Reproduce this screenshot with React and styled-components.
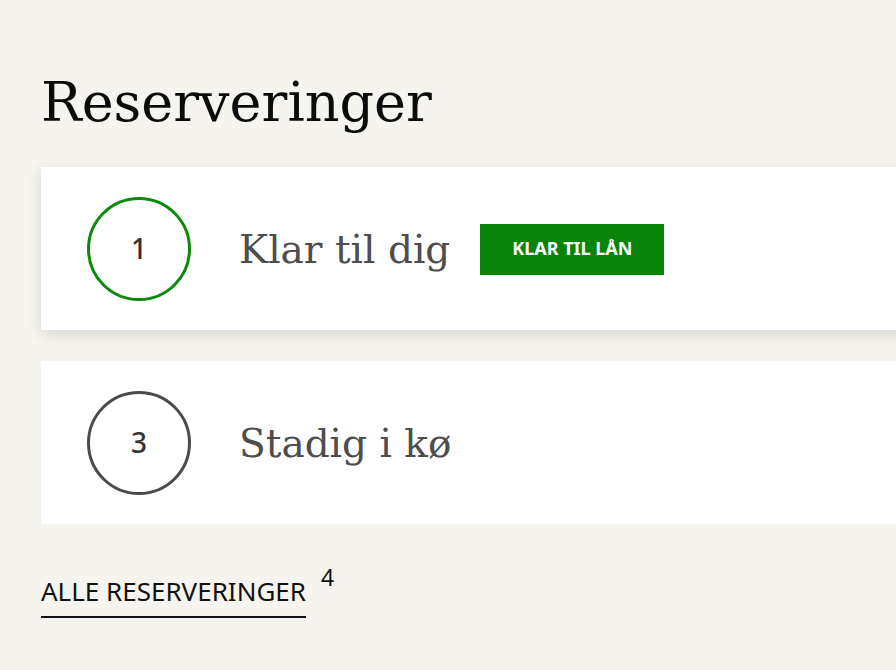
import styled, { createGlobalStyle } from 'styled-components';

const GlobalStyle = createGlobalStyle`
	html, body {
		margin: 0;
		padding: 0;
		background: #f5f4ef;
		overflow: hidden;
	}
`;

const Page = styled.div`
	padding: 70px 0 40px 41px;
	min-height: 670px;
	box-sizing: border-box;
`;

const Title = styled.h1`
	margin: 0 0 31px;
	font-family: 'DejaVu Serif', serif;
	font-weight: 400;
	font-size: 54px;
	line-height: 66px;
	color: #0b0b0b;
`;

const List = styled.div`
	display: flex;
	flex-direction: column;
	gap: 31px;
	margin-right: -40px;
`;

const Card = styled.div`
	display: flex;
	align-items: center;
	padding: 30px 46px 29px;
	background: #fff;
	box-shadow: ${(p) => (p.$raised ? '0 4px 14px rgba(0, 0, 0, 0.12)' : 'none')};
`;

const Count = styled.div`
	width: 104px;
	height: 104px;
	flex: none;
	box-sizing: border-box;
	border-radius: 50%;
	border: 3px solid ${(p) => p.$color};
	display: flex;
	align-items: center;
	justify-content: center;
	font-family: 'Noto Sans', sans-serif;
	font-size: 28px;
	font-weight: 500;
	color: #333;
	padding-bottom: 2px;
`;

const Label = styled.span`
	margin-left: 48px;
	font-family: 'DejaVu Serif', serif;
	font-size: 39px;
	color: #4d4d4d;
`;

const Badge = styled.span`
	margin-left: 30px;
	width: 184px;
	height: 51px;
	display: flex;
	align-items: center;
	justify-content: center;
	background: #088508;
	color: #fff;
	font-family: 'Noto Sans', sans-serif;
	font-weight: 700;
	font-size: 18px;
	padding-bottom: 3px;
	box-sizing: border-box;
`;

const Footer = styled.div`
	display: flex;
	align-items: flex-start;
	margin-top: 49px;
`;

const Link = styled.a`
	font-family: 'Noto Sans', sans-serif;
	font-size: 26px;
	line-height: 36px;
	color: #111;
	text-decoration: none;
	padding-bottom: 7px;
	border-bottom: 2px solid #111;
`;

const Sup = styled.span`
	margin-left: 15px;
	margin-top: -12px;
	font-family: 'Noto Sans', sans-serif;
	font-size: 23px;
	color: #111;
`;

const reservations = [
	{ count: 1, label: 'Klar til dig', color: '#0b8a0b', badge: 'KLAR TIL LÅN', raised: true },
	{ count: 3, label: 'Stadig i kø', color: '#4a4a4a' },
];

export default function App() {
	return (
		<>
			<GlobalStyle />
			<Page>
				<Title>Reserveringer</Title>
				<List>
					{reservations.map((r) => (
						<Card key={r.count} $raised={r.raised}>
							<Count $color={r.color}>{r.count}</Count>
							<Label>{r.label}</Label>
							{r.badge && <Badge>{r.badge}</Badge>}
						</Card>
					))}
				</List>
				<Footer>
					<Link href="#">ALLE RESERVERINGER</Link>
					<Sup>4</Sup>
				</Footer>
			</Page>
		</>
	);
}
